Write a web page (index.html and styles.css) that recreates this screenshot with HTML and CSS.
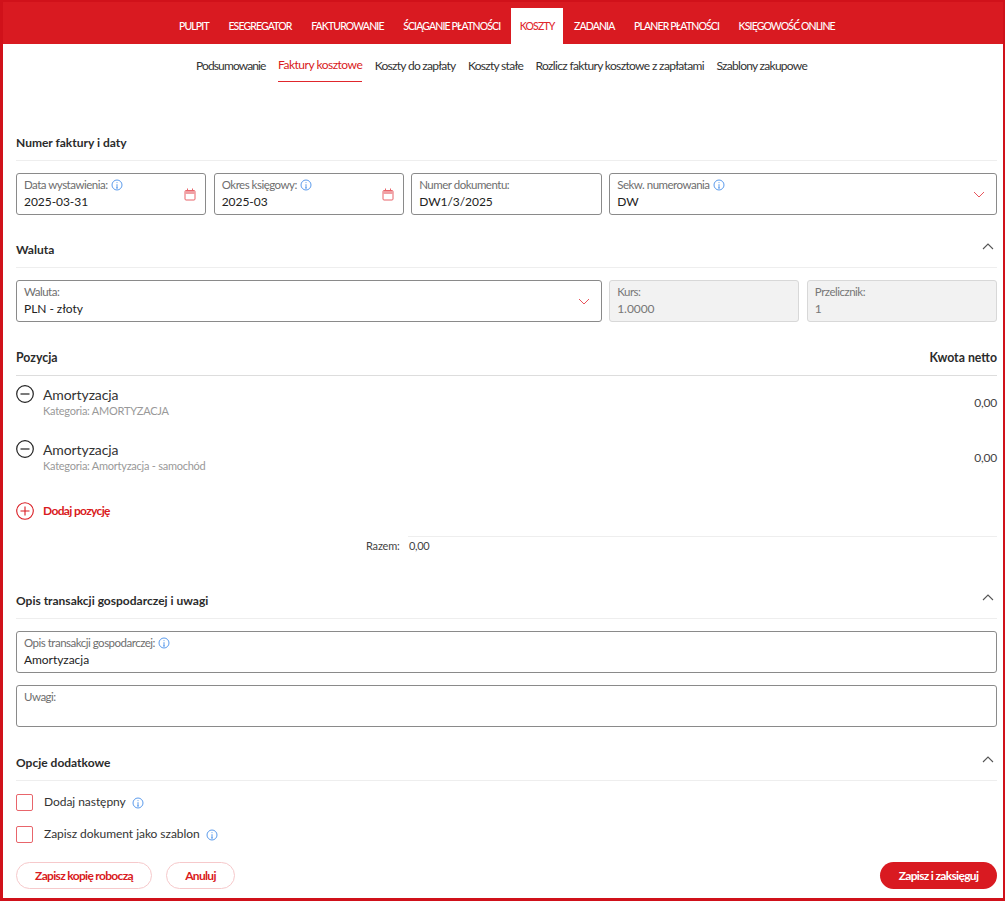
FILE: index.html
```html
<!DOCTYPE html>
<html lang="pl">
<head>
<meta charset="utf-8">
<title>Faktury kosztowe</title>
<link rel="stylesheet" href="styles.css">
</head>
<body>
<svg class="defs" width="0" height="0" aria-hidden="true">
  <symbol id="i-info" viewBox="0 0 12 12"><circle cx="6" cy="6" r="5" fill="none" stroke="#5b9bec" stroke-width="1"/><path d="M6 5.200V9M5 9h2M6 3.200v.9" fill="none" stroke="#5b9bec" stroke-width="1"/></symbol>
  <symbol id="i-cal" viewBox="0 0 12 13"><rect x="1" y="2.500" width="10" height="9.500" rx="1" fill="none" stroke="#e8656b" stroke-width="1"/><path d="M1 4.500h10" stroke="#f0a0a4" stroke-width="3"/><path d="M3.500 .5v2M8.500 .5v2" stroke="#e8656b" stroke-width="1"/></symbol>
  <symbol id="i-down" viewBox="0 0 12 7"><path d="M1 1l5 5 5-5" fill="none" stroke="#e8555c" stroke-width="1"/></symbol>
  <symbol id="i-up" viewBox="0 0 12 7"><path d="M1 6l5-5 5 5" fill="none" stroke="#555" stroke-width="1.100"/></symbol>
</svg>
<div class="frame">
  <nav class="topnav">
    <a class="tab">PULPIT</a>
    <a class="tab">ESEGREGATOR</a>
    <a class="tab">FAKTUROWANIE</a>
    <a class="tab">ŚCIĄGANIE PŁATNOŚCI</a>
    <a class="tab tab-active">KOSZTY</a>
    <a class="tab">ZADANIA</a>
    <a class="tab">PLANER PŁATNOŚCI</a>
    <a class="tab">KSIĘGOWOŚĆ ONLINE</a>
  </nav>
  <nav class="subnav">
    <a class="sub sub-tight">Podsumowanie</a>
    <a class="sub sub-active">Faktury kosztowe</a>
    <a class="sub">Koszty do zapłaty</a>
    <a class="sub">Koszty stałe</a>
    <a class="sub sub-loose">Rozlicz faktury kosztowe z zapłatami</a>
    <a class="sub">Szablony zakupowe</a>
  </nav>
  <main class="content">
    <section class="sec sec-first">
      <header class="sec-head"><h2>Numer faktury i daty</h2></header>
      <div class="grid-four">
        <div class="field">
          <div class="field-body">
            <span class="label">Data wystawienia: <svg class="info"><use href="#i-info"/></svg></span>
            <span class="value">2025-03-31</span>
          </div>
          <svg class="cal"><use href="#i-cal"/></svg>
        </div>
        <div class="field">
          <div class="field-body">
            <span class="label">Okres księgowy: <svg class="info"><use href="#i-info"/></svg></span>
            <span class="value">2025-03</span>
          </div>
          <svg class="cal"><use href="#i-cal"/></svg>
        </div>
        <div class="field">
          <div class="field-body">
            <span class="label">Numer dokumentu:</span>
            <span class="value">DW1/3/2025</span>
          </div>
        </div>
        <div class="field">
          <div class="field-body">
            <span class="label">Sekw. numerowania <svg class="info"><use href="#i-info"/></svg></span>
            <span class="value">DW</span>
          </div>
          <svg class="chev"><use href="#i-down"/></svg>
        </div>
      </div>
    </section>

    <section class="sec sec-waluta">
      <header class="sec-head"><h2>Waluta</h2><svg class="up"><use href="#i-up"/></svg></header>
      <div class="grid-three">
        <div class="field">
          <div class="field-body">
            <span class="label">Waluta:</span>
            <span class="value">PLN - złoty</span>
          </div>
          <svg class="chev"><use href="#i-down"/></svg>
        </div>
        <div class="field field-off">
          <div class="field-body">
            <span class="label">Kurs:</span>
            <span class="value">1.0000</span>
          </div>
        </div>
        <div class="field field-off">
          <div class="field-body">
            <span class="label">Przelicznik:</span>
            <span class="value">1</span>
          </div>
        </div>
      </div>
    </section>

    <section class="sec sec-items">
      <header class="items-head"><h2>Pozycja</h2><h2>Kwota netto</h2></header>
      <div class="item">
        <svg class="round" viewBox="0 0 18 18"><circle cx="9" cy="9" r="8.300" fill="none" stroke="#222" stroke-width="1.200"/><path d="M4.500 9h9" stroke="#222" stroke-width="1.200"/></svg>
        <div class="item-text">
          <span class="item-name">Amortyzacja</span>
          <span class="item-cat">Kategoria: AMORTYZACJA</span>
        </div>
        <span class="item-amount">0,00</span>
      </div>
      <div class="item">
        <svg class="round" viewBox="0 0 18 18"><circle cx="9" cy="9" r="8.300" fill="none" stroke="#222" stroke-width="1.200"/><path d="M4.500 9h9" stroke="#222" stroke-width="1.200"/></svg>
        <div class="item-text">
          <span class="item-name">Amortyzacja</span>
          <span class="item-cat">Kategoria: Amortyzacja - samochód</span>
        </div>
        <span class="item-amount">0,00</span>
      </div>
      <div class="add">
        <svg class="round" viewBox="0 0 18 18"><circle cx="9" cy="9" r="8.300" fill="none" stroke="#d91a21" stroke-width="1.100"/><path d="M4.500 9h9M9 4.500v9" stroke="#d91a21" stroke-width="1.100"/></svg>
        <span class="add-text">Dodaj pozycję</span>
      </div>
      <div class="total">
        <span class="total-label">Razem:</span>
        <span class="total-value">0,00</span>
      </div>
    </section>

    <section class="sec sec-opis">
      <header class="sec-head"><h2>Opis transakcji gospodarczej i uwagi</h2><svg class="up"><use href="#i-up"/></svg></header>
      <div class="stack">
        <div class="field">
          <div class="field-body">
            <span class="label">Opis transakcji gospodarczej: <svg class="info"><use href="#i-info"/></svg></span>
            <span class="value">Amortyzacja</span>
          </div>
        </div>
        <div class="field">
          <div class="field-body">
            <span class="label">Uwagi:</span>
          </div>
        </div>
      </div>
    </section>

    <section class="sec sec-opcje">
      <header class="sec-head sec-head-wide"><h2>Opcje dodatkowe</h2><svg class="up"><use href="#i-up"/></svg></header>
      <label class="check"><span class="box"></span><span class="check-text">Dodaj następny</span><svg class="info"><use href="#i-info"/></svg></label>
      <label class="check"><span class="box"></span><span class="check-text">Zapisz dokument jako szablon</span><svg class="info"><use href="#i-info"/></svg></label>
    </section>

    <footer class="actions">
      <button class="btn btn-ghost">Zapisz kopię roboczą</button>
      <button class="btn btn-ghost">Anuluj</button>
      <button class="btn btn-solid">Zapisz i zaksięguj</button>
    </footer>
  </main>
</div>
</body>
</html>
```
FILE: styles.css
```css
* { box-sizing: border-box; }
html, body { margin: 0; padding: 0; background: #fff; }
body { font-family: Lato, "Liberation Sans", sans-serif; color: #222; height: 902px; overflow: hidden; }
.defs { position: absolute; }
.frame { width: 1005px; height: 901px; border: solid #d0111a; border-width: 2px 2px 3px 3px; display: flex; flex-direction: column; overflow: hidden; }

.topnav { height: 42px; background: #d91a21; display: flex; align-items: flex-end; gap: 1.600px; padding-left: 167px; flex: none; }
.tab { height: 36px; padding: 0 9px; display: flex; align-items: center; color: #fff; font-size: 10.500px; font-weight: 500; letter-spacing: -.88px; white-space: nowrap; }
.tab-active { background: #fff; color: #e0262c; }

.subnav { height: 38px; display: flex; gap: 12.500px; padding-left: 193px; flex: none; }
.sub { height: 38px; display: flex; align-items: center; font-size: 12px; letter-spacing: -.72px; color: #333; white-space: nowrap; padding-top: 4px; }
.sub-tight { letter-spacing: -.88px; }
.sub-loose { letter-spacing: -.65px; }
.sub-active { color: #d91a21; border-bottom: 1px solid #e0262c; letter-spacing: -.5px; }

.content { flex: 1; padding: 0 6px 0 13px; display: flex; flex-direction: column; }
.sec-head { height: 36px; display: flex; justify-content: space-between; align-items: center; border-bottom: 1px solid #eee; padding-bottom: 1px; margin-bottom: 12px; }
.sec-head-wide { margin-bottom: 13px; }
h2 { margin: 0; font-size: 12px; font-weight: 700; color: #2b2b2b; }
.up { width: 12px; height: 7px; margin-right: 3px; margin-top: -6px; }

.sec-first { margin-top: 43px; }
.sec-waluta { margin-top: 17px; }
.sec-items { margin-top: 18px; }
.sec-opis { margin-top: 28px; }
.sec-opcje { margin-top: 18px; }

.grid-four { display: grid; grid-template-columns: 190.200px 190px 190.500px 1fr; column-gap: 7.500px; }
.grid-three { display: grid; grid-template-columns: 585.700px 1fr 1fr; column-gap: 7.500px; }
.stack { display: flex; flex-direction: column; gap: 12px; }

.field { height: 42px; border: 1px solid #8a8a8a; border-radius: 3px; padding: 3px 8px 0 7px; display: flex; justify-content: space-between; align-items: center; background: #fff; }
.field-off { background: #f2f2f2; border-color: #d8d8d8; }
.field-body { display: flex; flex-direction: column; align-self: flex-start; min-width: 0; }
.label { font-size: 11.500px; letter-spacing: -.5px; line-height: 16px; color: #6e6e6e; white-space: nowrap; display: flex; align-items: center; gap: 3px; }
.value { font-size: 12px; letter-spacing: -.05px; line-height: 18px; color: #222; white-space: nowrap; }
.field-off .value, .field-off .label { color: #777; }
.info { width: 12px; height: 12px; flex: none; }
.cal { width: 12px; height: 13px; margin-right: 1px; margin-top: -3px; }
.chev { width: 12px; height: 7px; margin-top: -2px; margin-right: 3px; }

.items-head { height: 36px; display: flex; justify-content: space-between; align-items: center; border-bottom: 1px solid #ddd; padding-bottom: 1px; }
.items-head h2 { font-size: 12.300px; }
.item { height: 55px; display: flex; align-items: flex-start; padding-top: 9px; }
.round { width: 18px; height: 18px; flex: none; margin-right: 9px; }
.item-text { display: flex; flex-direction: column; flex: 1; }
.item-name { font-size: 14px; letter-spacing: -.1px; line-height: 19px; color: #333; }
.item-cat { font-size: 11px; letter-spacing: -.25px; line-height: 13px; color: #999; }
.item-amount { font-size: 12px; letter-spacing: -.2px; color: #444; margin-top: 10px; }

.add { display: flex; align-items: center; margin-top: 16px; height: 18px; }
.add-text { font-size: 12px; font-weight: 700; letter-spacing: -.65px; color: #d91a21; margin-top: -2px; }
.total { display: flex; margin-top: 16px; }
.total-label { width: 392px; padding-left: 350px; font-size: 11px; letter-spacing: -.2px; line-height: 19px; color: #444; white-space: nowrap; }
.total-value { flex: 1; border-top: 1px solid #eee; font-size: 11px; letter-spacing: -.3px; padding-left: 1px; line-height: 18px; color: #444; }

.check { display: flex; align-items: center; height: 17px; margin-bottom: 15px; }
.box { width: 17px; height: 17px; border: 1px solid #e8656b; border-radius: 2px; margin-right: 11px; }
.check-text { font-size: 12px; letter-spacing: -.05px; color: #333; margin-right: 6px; margin-top: -2px; }

.actions { display: flex; gap: 14px; margin-top: 4px; }
.btn { height: 27px; border-radius: 14px; font-family: inherit; font-size: 12px; font-weight: 700; letter-spacing: -.68px; padding: 0; background: #fff; }
.btn-ghost { border: 1px solid #f6c9cb; color: #d91a21; width: 136px; }
.btn-ghost + .btn-ghost { width: 69px; }
.btn-solid { margin-left: auto; width: 117px; background: #d91a21; color: #fff; border: 0; }
```
